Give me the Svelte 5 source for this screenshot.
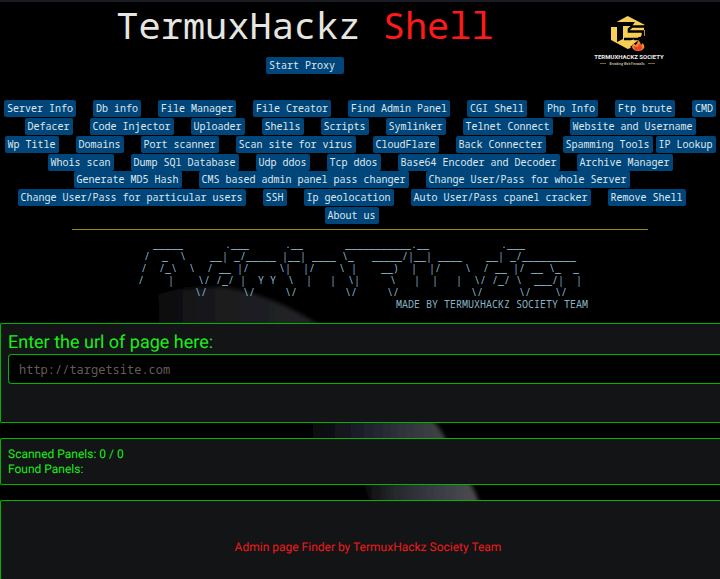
<script>
  const siteTools = [
    ['Server Info'], ['Db info'], ['File Manager'], ['File Creator'], ['Find Admin Panel'],
    ['CGI Shell'], ['Php Info'], ['Ftp brute'], ['CMD'],
    ['Defacer'], ['Code Injector'], ['Uploader'], ['Shells'], ['Scripts'], ['Symlinker'],
    ['Telnet Connect'], ['Website and Username'],
    ['Wp Title'], ['Domains'], ['Port scanner'], ['Scan site for virus'], ['CloudFlare'],
    ['Back Connecter'], ['Spamming Tools', 'IP Lookup'],
    ['Whois scan'], ['Dump SQl Database'], ['Udp ddos'], ['Tcp ddos'],
    ['Base64 Encoder and Decoder'], ['Archive Manager']
  ];

  const accountTools = [
    ['Generate MD5 Hash'], ['CMS based admin panel pass changer'],
    ['Change User/Pass for whole Server'],
    ['Change User/Pass for particular users'], ['SSH'], ['Ip geolocation'],
    ['Auto User/Pass cpanel cracker'], ['Remove Shell'],
    ['About us']
  ];

  const banner = [
    '_____       .___      .__       ___________.__            .___       ',
    '/  _  \\    __| _/_____ |__| ____ \\_   _____/|__| ____    __| _/_________',
    '/  /_\\  \\  / __ |/     \\|  |/    \\ |    __)  |  |/    \\  / __ |/ __ \\_  _',
    '/    |    \\/ /_/ |  Y Y  \\  |   |  \\|     \\   |  |   |  \\/ /_/ \\  ___/|  |',
    '        \\/      \\/     \\/        \\/     \\/            \\/      \\/    \\/ ',
    ' '.repeat(44) + 'MADE BY TERMUXHACKZ SOCIETY TEAM'
  ].join('\n');

  let url = $state('');
  let scanned = $state(0);
  let total = $state(0);
</script>

{#snippet toolList(groups)}
  <div class="tools">
    {#each groups as group}
      <span class="group">
        {#each group as name}
          <a class="chip" href="#tool">{name}</a>
        {/each}
      </span>
    {/each}
  </div>
{/snippet}

<div class="page">
  <svg class="backdrop" viewBox="0 0 720 579" preserveAspectRatio="xMidYMin slice" aria-hidden="true">
    <defs>
      <linearGradient id="upper" gradientUnits="userSpaceOnUse" x1="150" y1="0" x2="320" y2="0">
        <stop offset="0" stop-color="#050507" />
        <stop offset="0.3" stop-color="#18181b" />
        <stop offset="1" stop-color="#242529" />
      </linearGradient>
      <linearGradient id="middle" gradientUnits="userSpaceOnUse" x1="300" y1="0" x2="440" y2="0">
        <stop offset="0" stop-color="#000" />
        <stop offset="0.4" stop-color="#1c1c28" />
        <stop offset="0.75" stop-color="#33333d" />
        <stop offset="1" stop-color="#3f4243" />
      </linearGradient>
      <linearGradient id="lower" gradientUnits="userSpaceOnUse" x1="358" y1="0" x2="475" y2="0">
        <stop offset="0" stop-color="#040307" />
        <stop offset="0.3" stop-color="#25282a" />
        <stop offset="0.6" stop-color="#373742" />
        <stop offset="1" stop-color="#4b4c50" />
      </linearGradient>
      <filter id="soft" x="-10%" y="-20%" width="120%" height="140%"><feGaussianBlur stdDeviation="2" /></filter>
    </defs>
    <path d="M158 294Q182 286 220 287Q262 290 318 324V340H160Z" fill="url(#upper)" filter="url(#soft)" />
    <path d="M300 400H410Q436 418 446 440V460H300Z" fill="url(#middle)" filter="url(#soft)" />
    <path d="M358 465H460Q474 487 480 505V520H376Z" fill="url(#lower)" filter="url(#soft)" />
  </svg>

  <header>
    <div class="brand">
      <h1>TermuxHackz <span>Shell</span></h1>
      <a class="chip" href="#proxy">Start Proxy&nbsp;</a>
    </div>
    <svg class="logo" viewBox="0 0 66 52" role="img" aria-label="TermuxHackz Society">
      <path d="M31.7 0L49 9V27L31.7 33L15 24V9Z" fill="#f7cf57" />
      <path d="M13 6H39L36 10H27V23L21 26V11H13Z" fill="#000" />
      <path d="M50 10.5H36L33 13V15.5H47V20L42 23H28" fill="none" stroke="#000" stroke-width="2.6" />
      <path d="M50 9V14H48V9ZM48 20H50V34H38L34 31L40 26Z" fill="#000" />
      <path d="M35 20H45M29 29L38 24" stroke="#f7cf57" stroke-width="1.5" />
      <path d="M42 24Q45 26 45 29L47 27Q48 29 48.5 31Q47 35 42.5 35Q37 35 36 31L37 27L39.5 29Q41.500 28 42 24Z" fill="#f08a30" />
      <path d="M43 28Q47 30 46 33Q43 35.500 39 34Q37 32 38 30L40 31Q43 31 43 28Z" fill="#ee4030" />
      <text x="33" y="43" text-anchor="middle" class="logo-name">TERMUXHACKZ SOCIETY</text>
      <path d="M4 47.5H10M52 47.5H59" stroke="#80661b" />
      <text x="31" y="49" text-anchor="middle" class="logo-tag">Breaking Web Firewalls</text>
    </svg>
  </header>

  <nav aria-label="Tools">
    {@render toolList(siteTools)}
    <div class="account">{@render toolList(accountTools)}</div>
  </nav>

  <hr />

  <pre>{banner}</pre>

  <main>
    <section class="finder">
      <label for="target">Enter the url of page here:</label>
      <input id="target" type="text" placeholder="http://targetsite.com" bind:value={url} />
    </section>
    <section class="results">
      <div>Scanned Panels: {scanned} / {total}</div>
      <div>Found Panels:</div>
    </section>
    <section class="credits">Admin page Finder by TermuxHackz Society Team</section>
  </main>
</div>

<style>
  :global(body) {
    background: #000;
  }

  .page {
    --mono: 'Droid Sans Mono', 'Noto Sans Mono', 'DejaVu Sans Mono', monospace;
    box-sizing: border-box;
    position: relative;
    isolation: isolate;
    min-height: 100vh;
    border-top: 2px solid #1b1c23;
    background: #000;
    font-family: var(--mono);
  }

  .backdrop {
    position: absolute;
    z-index: -1;
    top: -2px;
    left: 0;
    width: 100%;
  }

  header {
    display: flex;
    align-items: flex-start;
    padding: 0 58px 0 14px;
  }

  .brand {
    flex: 1;
    display: flex;
    flex-direction: column;
    align-items: center;
    gap: 10px;
  }

  h1 {
    margin: 0;
    font-size: 37px;
    line-height: 45px;
    font-weight: 400;
    white-space: nowrap;
    color: #e6e6e0;
  }

  h1 span {
    color: #ff1a1a;
  }

  .logo {
    width: 66px;
    margin-top: 14px;
    overflow: visible;
  }

  .logo-name {
    font: 700 6px Roboto, sans-serif;
    fill: #eee;
  }

  .logo-tag {
    font: 700 3px 'Open Sans', sans-serif;
    fill: #c9bd9c;
  }

  .chip {
    padding: 0 3px;
    border-radius: 2px;
    background: #00467a;
    color: #dfe8ee;
    font-size: 10px;
    line-height: 17px;
    text-decoration: none;
    white-space: nowrap;
  }

  nav {
    margin-top: 26px;
  }

  .tools {
    display: flex;
    flex-wrap: wrap;
    justify-content: center;
    gap: 1px 17px;
  }

  .account {
    padding-right: 17px;
  }

  .group {
    display: flex;
    gap: 3px;
  }

  hr {
    width: 80%;
    height: 1px;
    margin: 5px auto 0;
    border: 0;
    background: #9d8911;
  }

  pre {
    margin: 8px 0 0;
    font-family: var(--mono);
    font-size: 10px;
    line-height: 12px;
    text-align: center;
    color: #86b5c7;
  }

  main {
    display: flex;
    flex-direction: column;
    gap: 15px;
    margin-top: 13px;
    font-family: Roboto, sans-serif;
    font-size: 12px;
    line-height: 15px;
    text-rendering: geometricPrecision;
    color: #1bed1b;
  }

  section {
    box-sizing: border-box;
    border: 1px solid #00b400;
    border-right: 0;
    border-radius: 2px 0 0 2px;
    background: #131416;
    padding: 8px 0 7px 7px;
  }

  .finder {
    min-height: 100px;
  }

  label {
    display: block;
    font-size: 18px;
    line-height: 22px;
  }

  input {
    display: block;
    box-sizing: border-box;
    width: 100%;
    height: 30px;
    padding: 0 10px;
    border: 1px solid #00b400;
    border-right: 0;
    border-radius: 4px 0 0 4px;
    background: #000;
    color: #1bed1b;
    font-family: var(--mono);
    font-size: 12px;
  }

  input::placeholder {
    color: #605e59;
    opacity: 1;
  }

  .credits {
    padding: 39px 0 24px 15px;
    text-align: center;
    color: #ed1b1b;
  }
</style>
